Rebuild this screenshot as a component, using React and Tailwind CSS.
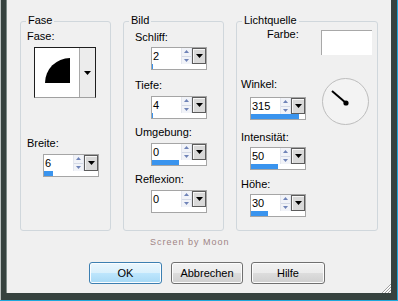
import React from 'react';

const Spin = ({ value, bar }) => (
  <div className="flex flex-col w-[56px] h-[23px] border border-[#a5a5a5] bg-white">
    <div className="flex h-[16px]">
      <span className="w-[29px] pl-[1px] text-[11px] leading-[16px] text-black">{value}</span>
      <div className="w-[11px] flex flex-col bg-[#f1f3f8] border-x border-[#e3e6ee]">
        <div className="flex-1 flex items-center justify-center border-b border-[#d3d9e6]">
          <svg width="5" height="3"><path d="M0 3L2.5 0L5 3Z" fill="#6f83b8" /></svg>
        </div>
        <div className="flex-1 flex items-center justify-center">
          <svg width="5" height="3"><path d="M0 0H5L2.5 3Z" fill="#6f83b8" /></svg>
        </div>
      </div>
      <div className="w-[14px] flex items-center justify-center border border-[#5c5c5c] bg-[#d9d9d9] shadow-[inset_1px_1px_0_#f6f6f6]">
        <svg width="7" height="4"><path d="M0 0H7L3.5 4Z" fill="#000" /></svg>
      </div>
    </div>
    <div className="h-[5px] flex">
      <div className="h-full bg-[#3a94ee]" style={{ width: bar }} />
    </div>
  </div>
);

const Group = ({ title, className, children }) => (
  <div className={`relative border border-[#d0d7dc] rounded-[3px] ${className}`}>
    <span className="absolute left-[5px] -top-[8px] px-[2px] bg-[#f0f0f0] text-[11px] leading-[13px]">{title}</span>
    {children}
  </div>
);

const Label = ({ children, className }) => (
  <div className={`text-[11px] leading-[13px] text-black ${className}`}>{children}</div>
);

export default function App() {
  return (
    <div className="w-[398px] h-[301px] bg-[#1ea8dc] font-['Liberation_Sans',Arial,sans-serif] text-black">
      <div className="w-[397px] h-[300px] bg-[#36423f] border-l border-[#b9c0bf] pl-[5px] pr-[6px] pb-[7px]">
        <div className="relative h-[293px] bg-[#f0f0f0] border-l border-[#7d8a87] pl-[13px] pt-[21px]">
          {/* groups */}
          <div className="flex gap-[12px] h-[210px]">
            <Group title="Fase" className="w-[91px]">
              <div className="pl-[6px] pt-[8px]">
                <Label>Fase:</Label>
                <div className="ml-[7px] mt-[4px] w-[62px] h-[51px] flex border border-[#1e1e1e] border-b-[#a0a0a0] bg-white">
                  <div className="w-[44px]">
                    <svg width="44" height="49">
                      <path d="M35 10A25 25 0 0 0 10 35L35 35Z" fill="#000" />
                    </svg>
                  </div>
                  <div className="w-[16px] flex items-center justify-center border-l border-[#a8a8a8] bg-[#ececec]">
                    <svg width="7" height="4"><path d="M0 0H7L3.5 4Z" fill="#000" /></svg>
                  </div>
                </div>
                <Label className="mt-[39px]">Breite:</Label>
                <div className="ml-[16px] mt-[4px]">
                  <Spin value="6" bar={9} />
                </div>
              </div>
            </Group>

            <Group title="Bild" className="w-[101px]">
              <div className="pl-[11px] pt-[9px]">
                <Label>Schliff:</Label>
                <div className="ml-[16px] mt-[3px]"><Spin value="2" bar={1} /></div>
                <Label className="mt-[9px]">Tiefe:</Label>
                <div className="ml-[16px] mt-[4px]"><Spin value="4" bar={1} /></div>
                <Label className="mt-[7px]">Umgebung:</Label>
                <div className="ml-[16px] mt-[4px]"><Spin value="0" bar={27} /></div>
                <Label className="mt-[7px]">Reflexion:</Label>
                <div className="ml-[16px] mt-[4px]"><Spin value="0" bar={0} /></div>
              </div>
            </Group>

            <Group title="Lichtquelle" className="w-[142px]">
              <div className="pt-[6px]">
                <div className="flex">
                  <Label className="ml-[30px]">Farbe:</Label>
                  <div className="ml-auto mr-[5px] mt-[2px] w-[51px] h-[25px] bg-white border-t border-l border-[#a8a8a8]" />
                </div>
                <div className="flex mt-[23px]">
                  <div className="pl-[4px]">
                    <Label>Winkel:</Label>
                    <div className="ml-[9px] mt-[6px]"><Spin value="315" bar={48} /></div>
                  </div>
                  <div className="ml-auto mr-[7px]">
                    <svg width="48" height="48">
                      <circle cx="23.5" cy="23.5" r="23" fill="#f3f3f3" stroke="#bdbdbd" />
                      <line x1="10" y1="13" x2="24" y2="25" stroke="#000" strokeWidth="2" />
                      <circle cx="24" cy="25" r="2.6" fill="#000" />
                    </svg>
                  </div>
                </div>
                <div className="pl-[4px]">
                  <Label className="mt-[5px]">Intensität:</Label>
                  <div className="ml-[9px] mt-[3px]"><Spin value="50" bar={27} /></div>
                  <Label className="mt-[8px]">Höhe:</Label>
                  <div className="ml-[9px] mt-[3px]"><Spin value="30" bar={17} /></div>
                </div>
              </div>
            </Group>
          </div>

          <div className="ml-[130px] mt-[6px] text-[9px] leading-[11px] tracking-[1px] text-[#a08585]">Screen by Moon</div>

          <div className="flex mt-[14px] ml-[69px] text-[11px]">
            <button className="w-[73px] h-[22px] rounded-[3px] border border-[#3c7fb1] bg-[linear-gradient(#eaf6fd,#d9f0fc_50%,#bee6fd_50%,#a7d9f5)] shadow-[inset_0_0_0_1px_#fbfdff]">OK</button>
            <button className="ml-[9px] w-[72px] h-[22px] rounded-[3px] border border-[#707070] bg-[linear-gradient(#f2f2f2,#ebebeb_50%,#dddddd_50%,#cfcfcf)] shadow-[inset_0_0_0_1px_#fcfcfc]">Abbrechen</button>
            <button className="ml-[8px] w-[74px] h-[22px] rounded-[3px] border border-[#707070] bg-[linear-gradient(#f2f2f2,#ebebeb_50%,#dddddd_50%,#cfcfcf)] shadow-[inset_0_0_0_1px_#fcfcfc]">Hilfe</button>
          </div>

          {/* resize grip */}
          <svg className="absolute right-0 bottom-0" width="12" height="10">
            <path d="M3 10L12 1M6 10L12 4M9 10L12 7" stroke="#a0a0a0" strokeWidth="1" />
            <path d="M4 10L12 2M7 10L12 5M10 10L12 8" stroke="#ffffff" strokeWidth="1" />
          </svg>
        </div>
      </div>
    </div>
  );
}
